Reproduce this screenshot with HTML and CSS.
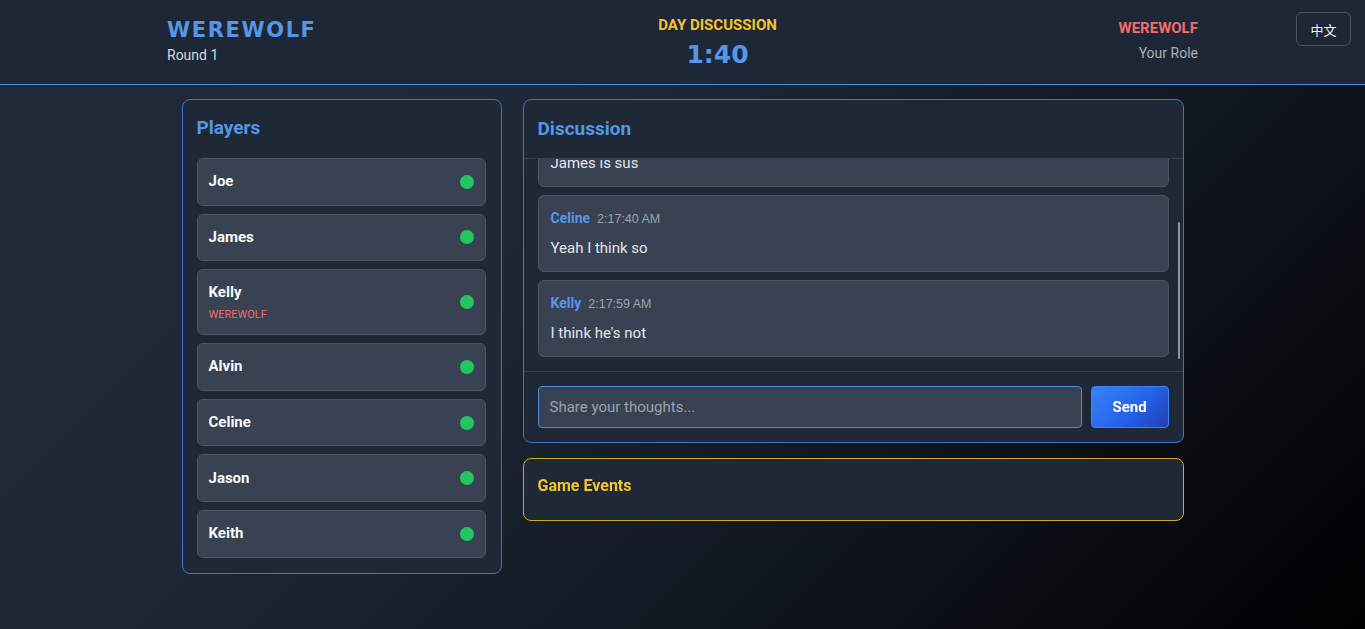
FILE: index.html
```html
<!DOCTYPE html>
<html lang="en">
<head>
<meta charset="utf-8">
<title>Werewolf</title>
<link rel="stylesheet" href="styles.css">
</head>
<body>
<header class="topbar">
  <div class="topbar-inner">
    <div class="brand">
      <div class="brand-title">WEREWOLF</div>
      <div class="brand-round">Round 1</div>
    </div>
    <div class="phase">
      <div class="phase-name">DAY DISCUSSION</div>
      <div class="phase-timer">1:40</div>
    </div>
    <div class="role">
      <div class="role-name">WEREWOLF</div>
      <div class="role-label">Your Role</div>
    </div>
  </div>
  <button class="lang-btn">中文</button>
</header>

<main class="layout">
  <section class="panel players">
    <h2 class="panel-title">Players</h2>
    <ul class="player-list">
      <li class="player"><div class="player-info"><span class="player-name">Joe</span></div><span class="dot"></span></li>
      <li class="player"><div class="player-info"><span class="player-name">James</span></div><span class="dot"></span></li>
      <li class="player"><div class="player-info"><span class="player-name">Kelly</span><span class="player-role">WEREWOLF</span></div><span class="dot"></span></li>
      <li class="player"><div class="player-info"><span class="player-name">Alvin</span></div><span class="dot"></span></li>
      <li class="player"><div class="player-info"><span class="player-name">Celine</span></div><span class="dot"></span></li>
      <li class="player"><div class="player-info"><span class="player-name">Jason</span></div><span class="dot"></span></li>
      <li class="player"><div class="player-info"><span class="player-name">Keith</span></div><span class="dot"></span></li>
    </ul>
  </section>

  <div class="right-col">
    <section class="panel discussion">
      <div class="discussion-head">
        <h2 class="panel-title">Discussion</h2>
      </div>
      <div class="messages-wrap">
        <div class="messages">
          <div class="message-list">
            <div class="message">
              <div class="msg-meta"><span class="msg-author">James</span><span class="msg-time">2:17:12 AM</span></div>
              <div class="msg-text">Good morning everyone</div>
            </div>
            <div class="message">
              <div class="msg-meta"><span class="msg-author">Joe</span><span class="msg-time">2:17:25 AM</span></div>
              <div class="msg-text">James is sus</div>
            </div>
            <div class="message">
              <div class="msg-meta"><span class="msg-author">Celine</span><span class="msg-time">2:17:40 AM</span></div>
              <div class="msg-text">Yeah I think so</div>
            </div>
            <div class="message">
              <div class="msg-meta"><span class="msg-author">Kelly</span><span class="msg-time">2:17:59 AM</span></div>
              <div class="msg-text">I think he's not</div>
            </div>
          </div>
        </div>
        <span class="scroll-thumb"></span>
      </div>
      <form class="composer">
        <input class="composer-input" type="text" placeholder="Share your thoughts..." autofocus>
        <button class="send-btn" type="button">Send</button>
      </form>
    </section>

    <section class="panel events">
      <h3 class="events-title">Game Events</h3>
    </section>
  </div>
</main>
</body>
</html>
```

FILE: styles.css
```css
* { box-sizing: border-box; }

html, body { margin: 0; padding: 0; }

body {
  min-height: 100vh;
  font-family: Roboto, "Liberation Sans", sans-serif;
  color: #e5e7eb;
  background: linear-gradient(135deg, #1f2937 0%, #1e2837 33%, #131a25 62%, #000 100%);
}

/* ---------- header ---------- */
.topbar {
  position: relative;
  height: 85px;
  background: #1e2736;
  border-bottom: 1px solid #4a8ee0;
}

.topbar-inner {
  width: 1031px;
  height: 84px;
  margin: 0 auto;
  display: flex;
  justify-content: space-between;
  align-items: center;
}

.brand { margin-top: -2px; }

.brand-title {
  font-family: "DejaVu Sans", sans-serif;
  font-weight: 700;
  font-size: 21px;
  letter-spacing: 1.6px;
  line-height: 26px;
  color: #5596e6;
}

.brand-round {
  margin-top: 2px;
  font-size: 14px;
  line-height: 20px;
  color: #d4d8de;
}

.phase { text-align: center; margin-top: 2px; }

.phase-name {
  font-size: 15px;
  font-weight: 700;
  line-height: 20px;
  color: #f4c430;
}

.phase-timer {
  margin-top: 4px;
  font-family: "DejaVu Sans", sans-serif;
  font-weight: 700;
  font-size: 25px;
  line-height: 32px;
  color: #5596e6;
}

.role { text-align: right; margin-top: -3px; }

.role-name {
  font-size: 15px;
  font-weight: 700;
  line-height: 20px;
  color: #f26b6b;
}

.role-label {
  margin-top: 5px;
  font-size: 14px;
  line-height: 20px;
  color: #a9b0bb;
}

.lang-btn {
  position: absolute;
  top: 12px;
  right: 14px;
  width: 55px;
  height: 34px;
  background: #1e2736;
  border: 1px solid #4b5563;
  border-radius: 6px;
  color: #f3f4f6;
  font-family: "Noto Sans CJK SC", sans-serif;
  font-size: 13px;
  cursor: pointer;
}

/* ---------- layout ---------- */
.layout {
  width: 1002px;
  margin: 0 auto;
  padding-top: 14px;
  display: grid;
  grid-template-columns: 320px 1fr;
  column-gap: 21px;
  align-items: start;
}

.panel {
  background: #1e2836;
  border: 1px solid #3d76c9;
  border-radius: 8px;
}

.panel-title {
  margin: 0;
  font-size: 19px;
  font-weight: 700;
  line-height: 26px;
  color: #5596e6;
}

/* ---------- players ---------- */
.players { padding: 15px 15px 15px 14px; }

.player-list {
  list-style: none;
  margin: 17px 0 0;
  padding: 0;
  display: flex;
  flex-direction: column;
  gap: 8px;
}

.player {
  display: flex;
  align-items: center;
  justify-content: space-between;
  min-height: 47.6px;
  padding: 12px 11px;
  background: #384252;
  border: 1px solid #4b5563;
  border-radius: 6px;
}

.player-info { display: flex; flex-direction: column; }

.player-name {
  font-size: 15px;
  font-weight: 700;
  line-height: 21px;
  color: #f9fafb;
}

.player-role {
  margin-top: 5px;
  font-size: 11px;
  line-height: 14px;
  color: #f26b6b;
}

.dot {
  width: 14px;
  height: 14px;
  border-radius: 50%;
  background: #22c55e;
}

/* ---------- discussion ---------- */
.right-col {
  display: flex;
  flex-direction: column;
  gap: 15px;
}

.discussion-head {
  padding: 16px 15px 16px 14px;
  border-bottom: 1px solid #343e4e;
}

.messages-wrap { position: relative; }

.messages {
  height: 212px;
  overflow-y: auto;
  display: flex;
  flex-direction: column-reverse;
  scrollbar-width: none;
}

.messages::-webkit-scrollbar { display: none; }

.scroll-thumb {
  position: absolute;
  right: 3px;
  top: 63px;
  width: 2px;
  height: 137px;
  border-radius: 1px;
  background: #8c939d;
}

.message-list {
  display: flex;
  flex-direction: column;
  gap: 8px;
  padding: 15px 14px 14px 14px;
}

.message {
  padding: 12px 12px 13px;
  background: #384252;
  border: 1px solid #4b5563;
  border-radius: 6px;
}

.msg-meta {
  display: flex;
  align-items: baseline;
  gap: 7px;
  line-height: 20px;
}

.msg-author {
  font-size: 14px;
  font-weight: 700;
  color: #5596e6;
}

.msg-time {
  font-family: "Liberation Sans", Arial, sans-serif;
  font-size: 12.5px;
  color: #9ca3af;
}

.msg-text {
  margin-top: 9px;
  font-size: 15px;
  line-height: 20px;
  color: #e5e7eb;
}

.composer {
  display: flex;
  gap: 9px;
  margin: 0;
  padding: 14px;
  border-top: 1px solid #343e4e;
}

.composer-input {
  flex: 1;
  height: 42px;
  padding: 0 11px;
  background: #384252;
  border: 1px solid #4a8ee0;
  border-radius: 4px;
  color: #f3f4f6;
  font-family: Roboto, "Liberation Sans", sans-serif;
  font-size: 15px;
  outline: none;
}

.composer-input::placeholder { color: #9ca3af; }

.send-btn {
  width: 78px;
  height: 42px;
  background: linear-gradient(135deg, #3b82f6 0%, #2563eb 55%, #1e40af 100%);
  border: 1px solid #3b82f6;
  border-radius: 4px;
  color: #ffffff;
  font-family: Roboto, "Liberation Sans", sans-serif;
  font-size: 15px;
  font-weight: 700;
  cursor: pointer;
}

/* ---------- events ---------- */
.events {
  padding: 17px 14px 24px;
  border-color: #d1a82a;
}

.events-title {
  margin: 0;
  font-size: 16px;
  font-weight: 700;
  line-height: 20px;
  color: #f4c430;
}
```
